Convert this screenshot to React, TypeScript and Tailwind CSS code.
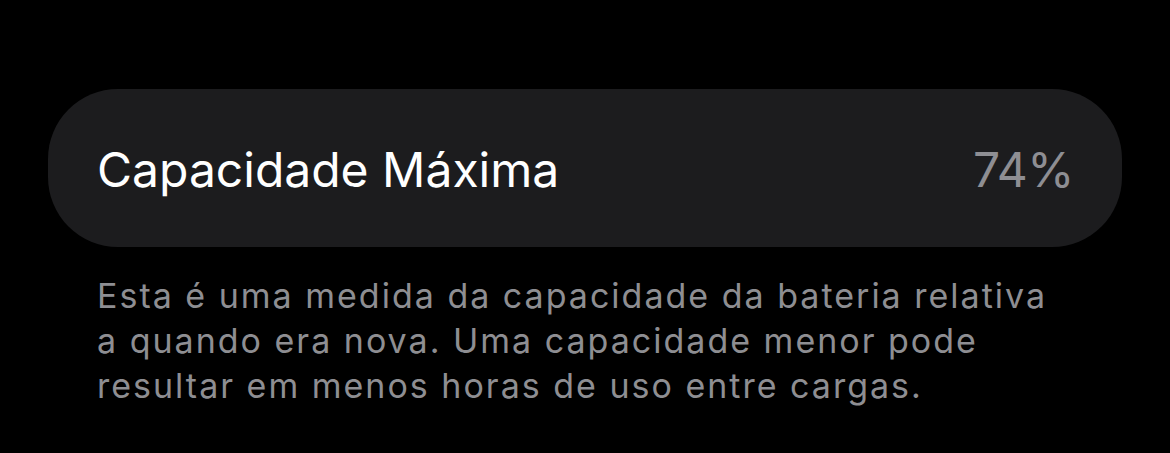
const lines = [
    "Esta é uma medida da capacidade da bateria relativa",
    "a quando era nova. Uma capacidade menor pode",
    "resultar em menos horas de uso entre cargas.",
]

const App = () => {
    return (
        <div className="h-[453px] w-[1170px] bg-black font-['Inter',sans-serif] antialiased">
            <div className="px-12 pt-[89px]">
                <div className="flex h-[158px] items-center justify-between rounded-[70px] bg-[#1c1c1e] pl-[49px] pr-[48px]">
                    <span className="pt-[4px] text-[48px] leading-none text-white">Capacidade Máxima</span>
                    <span className="pt-[4px] text-[48px] leading-none tracking-[-0.5px] text-[#8e8e93]">74%</span>
                </div>
                <p className="mt-[26px] pl-[49px] text-[34px] leading-[45px] tracking-[2px] text-[#8e8e92]">
                    {lines.map((line) => (
                        <span key={line} className="block whitespace-nowrap">{line}</span>
                    ))}
                </p>
            </div>
        </div>
    )
}

export default App
